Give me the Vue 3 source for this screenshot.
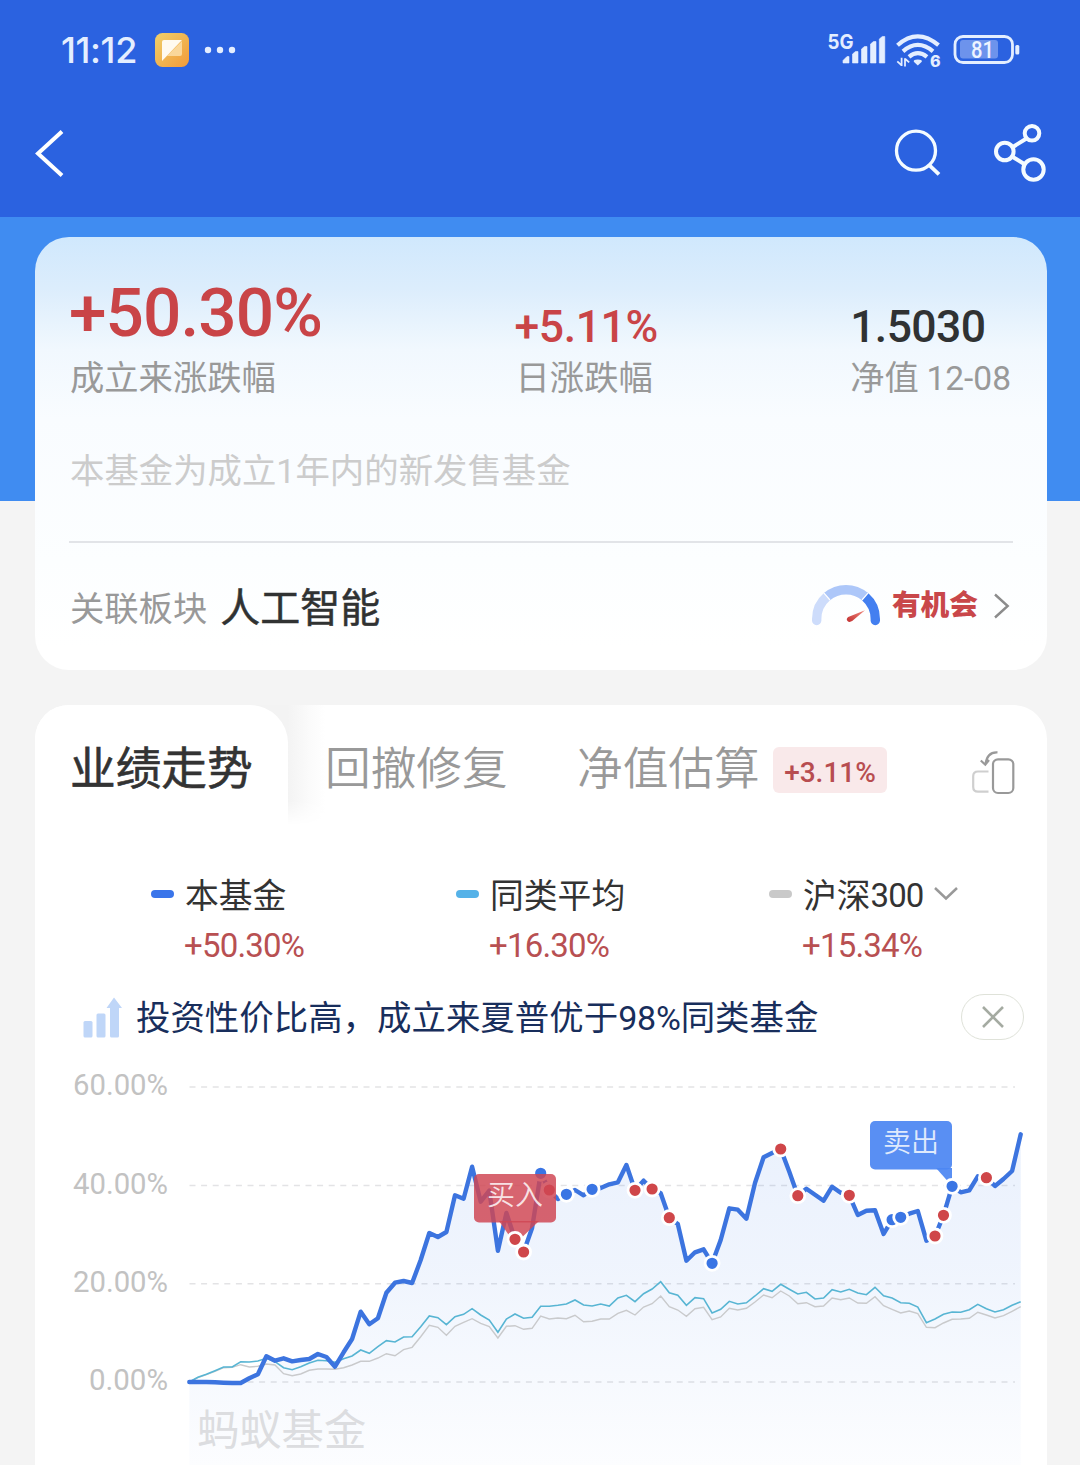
<script setup>
const STEP = 8.571
const X0 = 154.3
const TOP = 1054

const fund = [
  1382, 1382, 1382, 1382.3, 1382.7, 1383, 1383, 1378.3, 1374.3, 1356.3, 1360.7, 1358.3, 1361.3, 1360, 1359, 1354, 1357,
  1366.7, 1352.3, 1339, 1311.7, 1324.3, 1318.3, 1292.7, 1282.7, 1281, 1283, 1260, 1233, 1237, 1232, 1195.3, 1198.7,
  1166.7, 1201.7, 1190.7, 1250.7, 1213, 1239.3, 1252, 1228, 1173.3, 1190, 1199, 1194.3, 1190, 1195.3, 1189.3, 1188,
  1184.3, 1182.3, 1165, 1190.3, 1180.7, 1189, 1193.3, 1217.7, 1224, 1260.7, 1252.3, 1249.3, 1263.3, 1240, 1208.3,
  1209.7, 1218.7, 1183, 1157.3, 1153, 1149, 1171.7, 1195.7, 1188.7, 1194.7, 1200.7, 1186.7, 1192.7, 1195.3, 1215,
  1210.7, 1210.3, 1234, 1219.7, 1217.3, 1213.7, 1211, 1240.7, 1236, 1215.3, 1186.3, 1192.3, 1190.3, 1176.3, 1177.7,
  1186, 1179, 1171, 1134.3,
]
const peers = [
  1382, 1377.3, 1374.3, 1370.7, 1367, 1367, 1361.7, 1362, 1361, 1358.3, 1361.7, 1367.7, 1369.7, 1366.7, 1363, 1360.3,
  1360.7, 1362.3, 1358.7, 1356, 1350, 1353.3, 1346.7, 1340.7, 1342, 1337, 1336.7, 1326.7, 1316, 1317.7, 1324.7, 1316.7,
  1314.3, 1308.7, 1315, 1320, 1332.3, 1319, 1314, 1318.3, 1317.3, 1306.3, 1306.3, 1305.3, 1304, 1300, 1305, 1306, 1304,
  1306, 1298, 1295.3, 1301.7, 1293.7, 1289, 1281.7, 1292.7, 1295.3, 1305.3, 1297.7, 1298.7, 1313, 1309.3, 1301.3, 1304,
  1302.8, 1296, 1288.7, 1291.3, 1284.3, 1289.3, 1294, 1292.3, 1299, 1298, 1289.7, 1292, 1289.3, 1293, 1294.7, 1287.3,
  1295.7, 1298, 1302.7, 1303.3, 1307, 1322.7, 1319, 1314.3, 1312, 1312.3, 1309.7, 1304.3, 1308.7, 1312, 1309.7, 1305.3,
  1301.7,
]
const index300 = [
  1382, 1377.7, 1374.7, 1371.3, 1367.7, 1367.3, 1364.7, 1367, 1366.3, 1364, 1365, 1373.7, 1375.7, 1374, 1370.3, 1369,
  1369, 1369.3, 1367.7, 1365, 1361.3, 1361.3, 1358, 1353.7, 1355.7, 1349.7, 1347.3, 1336.7, 1325.3, 1327.3, 1335.3,
  1326.3, 1322.3, 1318.7, 1323.3, 1326.7, 1338, 1326.3, 1325.7, 1329.3, 1328.3, 1316, 1319, 1318, 1318.7, 1315.3,
  1321.7, 1321.3, 1319, 1319, 1313.3, 1310.3, 1315, 1307, 1303.7, 1296, 1306.7, 1310, 1316.3, 1308.7, 1307.3, 1319.7,
  1317, 1308.3, 1310, 1308.3, 1302, 1295, 1297.7, 1291, 1296, 1303.7, 1302.7, 1306.7, 1306, 1298, 1299.7, 1298, 1303,
  1303.3, 1296.7, 1305.7, 1309.3, 1313, 1311, 1313.7, 1327.3, 1327.7, 1323, 1319.3, 1319, 1318.3, 1312.3, 1315, 1318,
  1315.7, 1311.3, 1306.7,
]

const px = (i) => +(X0 + i * STEP).toFixed(1)
const py = (v) => +(v - TOP).toFixed(1)
const line = (values) => values.map((v, i) => `${px(i)},${py(v)}`).join(' ')
const area = `${px(0)},411 ${line(fund)} ${px(97)},411`

const buys = [38, 39, 42, 52, 54, 56, 69, 71, 77, 87, 88, 93]
const sells = [41, 44, 47, 61, 82, 83, 89]
const trades = [...buys.map((i) => [i, 'buy']), ...sells.map((i) => [i, 'sell'])]
  .sort((a, b) => a[0] - b[0])
  .map(([i, kind]) => ({ i, kind, x: px(i), y: py(fund[i]) }))
const under = trades.filter((t) => t.i === 41 || t.i === 42)
const over = trades.filter((t) => t.i !== 41 && t.i !== 42)

const axis = [
  { label: '60.00%', y: 33, x: 38, w: 95 },
  { label: '40.00%', y: 131.5, x: 38, w: 95 },
  { label: '20.00%', y: 229.7, x: 38, w: 95 },
  { label: '0.00%', y: 328, x: 54, w: 79 },
]
const legend = [
  { name: '本基金', value: '+50.30%', color: '#3a75ea' },
  { name: '同类平均', value: '+16.30%', color: '#55b2e8' },
  { name: '沪深', digits: '300', value: '+15.34%', color: '#c9c9c9', menu: true },
]
</script>

<template>
  <div class="page">
    <header class="top">
      <div class="status">
        <span class="clock">11:12</span>
        <svg class="app-icon" width="34" height="34" viewBox="0 0 34 34">
          <defs>
            <linearGradient id="gold" x1="0" y1="0" x2="1" y2="1">
              <stop offset="0" stop-color="#efd06c" />
              <stop offset="1" stop-color="#f29a38" />
            </linearGradient>
          </defs>
          <rect width="34" height="34" rx="7.5" fill="url(#gold)" />
          <path d="M27 8V21q0 2-2 2H12z" fill="#fad79a" />
          <path d="M7 9q0-2 2-2H27L7 28z" fill="#fffaf0" />
        </svg>
        <svg class="dots" width="32" height="8" viewBox="0 0 32 8" fill="#e4eeff">
          <circle cx="4" cy="4" r="3.200" /><circle cx="16" cy="4" r="3.200" /><circle cx="28" cy="4" r="3.200" />
        </svg>
        <svg class="signals" width="196" height="40" viewBox="826 30 196 40">
          <g fill="#e4eeff">
            <text x="827.500" y="48.500" class="g5" textLength="26" lengthAdjust="spacingAndGlyphs">5G</text>
            <path d="M843 63v-2.500l4-4h2v6.500zM852.500 63v-9l3-2.500h2.500V63zM861.500 63V49l3-2.500h2.500V63zM870.500 63V44l3-2.500h2.500V63zM879.300 63V39l3-2.500h2.500V63z" stroke="#e4eeff" stroke-width=".6" stroke-linejoin="round" />
            <path d="M917.800 65.500l-4-3.700q-.600-2.300 4-2.300t4 2.300z" />
            <path d="M901.600 57.800v8.200M897.300 61.300l4.300 4M905 66.500v-8.200M905 58.800l4.200 3.600" fill="none" stroke="#e4eeff" stroke-width="1.800" />
            <text x="930" y="66.500" class="g6">6</text>
            <rect x="1015.300" y="45" width="4" height="9.500" rx="1.500" />
          </g>
          <g fill="none" stroke="#e4eeff" stroke-width="4.200">
            <path d="M897.500 45.200Q917.500 27.500 938.500 45.200" />
            <path d="M903 51.300Q917.700 38.500 933 51.300" />
            <path d="M909 56.800Q917.800 49.500 927 56.800" />
          </g>
          <rect x="955" y="36.500" width="57.500" height="26" rx="8" fill="none" stroke="#e4eeff" stroke-width="2.800" />
          <rect x="960" y="40" width="38" height="18.500" rx="3" fill="#6d93ec" />
          <text x="971" y="58" class="batt" textLength="23" lengthAdjust="spacingAndGlyphs">81</text>
        </svg>
      </div>
      <nav class="nav">
        <svg width="32" height="52" viewBox="34 127 32 52" fill="none" stroke="#fff" stroke-width="4">
          <path d="M62 131.500L38 153.500l24 22" />
        </svg>
        <svg width="156" height="64" viewBox="892 121 156 64" fill="none" stroke="#f4fbff">
          <circle cx="916" cy="150.700" r="19.500" stroke-width="3.300" />
          <path d="M929.500 165.300l9.500 9" stroke-width="3.800" />
          <g stroke-width="4">
            <circle cx="1032" cy="133.300" r="7.300" />
            <circle cx="1004.800" cy="151.500" r="8.800" />
            <circle cx="1033.500" cy="169.500" r="10.200" />
            <path d="M1026.500 138.500l-14.500 9M1012 156.500l13 8" />
          </g>
        </svg>
      </nav>
    </header>

    <main class="body">
      <section class="card summary">
        <div class="stats">
          <div class="stat">
            <div class="num big">+50.30%</div>
            <div class="label">成立来涨跌幅</div>
          </div>
          <div class="stat mid">
            <div class="num">+5.11%</div>
            <div class="label">日涨跌幅</div>
          </div>
          <div class="stat last">
            <div class="num dark">1.5030</div>
            <div class="label">净值 <span class="date">12-08</span></div>
          </div>
        </div>
        <p class="note">本基金为成立<span class="one">1</span>年内的新发售基金</p>
        <div class="sector">
          <span class="label">关联板块</span>
          <span class="sector-name">人工智能</span>
          <svg class="gauge" width="72" height="46" viewBox="810 584 72 46">
            <defs>
              <linearGradient id="needle" x1="0" y1="1" x2="1" y2="0">
                <stop offset="0" stop-color="#c22f2f" /><stop offset="1" stop-color="#f08a80" />
              </linearGradient>
            </defs>
            <g fill="none" stroke-width="9.400">
              <path d="M816.700 621.500v-1.500A29.300 29.300 0 0 1 827 597.700" stroke="#cddcfb" stroke-linecap="round" />
              <path d="M865.300 597.900A29.300 29.300 0 0 1 875.300 620v1.500" stroke="#437ff0" stroke-linecap="round" />
              <path d="M827 597.700A29.300 29.300 0 0 1 865 597.700" stroke="#adc7f9" />
            </g>
            <path d="M823.800 593.800l6.200 7.200M868.200 593.800l-6.200 7.200" stroke="#fff" stroke-width="1.200" />
            <path d="M865 611.300l-12.800 10.800q-3 1.700-4.700-.200t.700-4z" fill="url(#needle)" />
          </svg>
          <span class="chance">有机会</span>
          <svg class="more" width="18" height="26" viewBox="0 0 18 26" fill="none" stroke="#8c8c8c" stroke-width="2.400">
            <path d="M2 1.500l12.700 11.500L2 24.500" />
          </svg>
        </div>
      </section>

      <section class="card trend">
        <div class="tabs">
          <div class="tab active"><span>业绩走势</span></div>
          <div class="tab second">回撤修复</div>
          <div class="tab third">净值估算</div>
          <span class="badge">+3.11%</span>
          <svg class="rotate" width="46" height="48" viewBox="970 748 46 48" fill="none" stroke-width="2.200">
            <path d="M988.500 771.500H978q-4.800 0-4.800 4.800V787q0 4.700 4.800 4.700h10.500" stroke="#cfcfcf" />
            <rect x="993" y="759.300" width="20.300" height="33.700" rx="5" stroke="#999" />
            <path d="M997.500 752.400q-10.500-.700-12 12M980.800 760.500l4.500 4.200 3.700-4.700" stroke="#999" />
          </svg>
        </div>

        <div class="legend">
          <div v-for="item in legend" :key="item.name" class="legend-item">
            <i class="dash" :style="{ background: item.color }"></i>
            <div>
              <div class="legend-name">
                {{ item.name }}<span v-if="item.digits" class="digits">{{ item.digits }}</span>
                <svg v-if="item.menu" width="26" height="18" viewBox="0 0 26 18" fill="none" stroke="#999" stroke-width="2.500">
                  <path d="M2 3l11 10.500L24 3" />
                </svg>
              </div>
              <div class="legend-value">{{ item.value }}</div>
            </div>
          </div>
        </div>

        <div class="tip">
          <svg width="42" height="44" viewBox="82 995 42 44" fill="#bfd6f8">
            <rect x="83.500" y="1021" width="9" height="16.500" rx="1.500" />
            <rect x="96.500" y="1013.500" width="9" height="24" rx="1.500" />
            <path d="M110 1036V1008h-3.500l7.500-10.500 8 10.500H119v28q0 1.500-1.500 1.500h-6q-1.500 0-1.500-1.500z" />
          </svg>
          <span class="tip-text">投资性价比高，成立来夏普优于<span class="pct">98%</span>同类基金</span>
          <button class="close" aria-label="close">
            <svg width="24" height="22" viewBox="0 0 24 22" fill="none" stroke="#a5aba2" stroke-width="2.600">
              <path d="M2 1l20 20M22 1L2 21" />
            </svg>
          </button>
        </div>

        <svg class="chart" width="1012" height="411" viewBox="0 0 1012 411">
          <defs>
            <linearGradient id="fill" x1="0" y1="80" x2="0" y2="411" gradientUnits="userSpaceOnUse">
              <stop offset="0" stop-color="#3a7aea" stop-opacity=".105" />
              <stop offset=".4" stop-color="#3a7aea" stop-opacity=".08" />
              <stop offset="1" stop-color="#3a7aea" stop-opacity=".015" />
            </linearGradient>
          </defs>
          <g v-for="row in axis" :key="row.label">
            <text class="tick" :x="row.x" :y="row.y + 8" :textLength="row.w" lengthAdjust="spacingAndGlyphs">{{ row.label }}</text>
            <line x1="154.500" x2="980" :y1="row.y" :y2="row.y" class="grid" />
          </g>
          <polygon :points="area" fill="url(#fill)" />
          <text class="watermark" x="162" y="391">蚂蚁基金</text>
          <polyline :points="line(index300)" fill="none" stroke="#c9cacc" stroke-width="1.400" />
          <polyline :points="line(peers)" fill="none" stroke="#58b5d3" stroke-width="1.600" />
          <polyline :points="line(fund)" fill="none" stroke="#3c74df" stroke-width="4.400" stroke-linejoin="round" stroke-linecap="round" />
          <circle v-for="t in under" :key="t.i" :cx="t.x" :cy="t.y" r="7" :class="['dot', t.kind]" />
          <rect x="439" y="120" width="82" height="48.500" rx="5" class="flag-buy" />
          <path d="M464 167h40l-24 23z" class="flag-buy" />
          <rect x="835" y="67" width="82" height="48.500" rx="5" class="flag-sell" />
          <path d="M901 114h16v18z" class="flag-sell" />
          <circle v-for="t in over" :key="t.i" :cx="t.x" :cy="t.y" r="7" :class="['dot', t.kind]" />
          <text x="452" y="151" class="flag-text">买入</text>
          <text x="848" y="98" class="flag-text">卖出</text>
        </svg>
      </section>
    </main>
  </div>
</template>

<style>
body {
  background: #f4f4f4;
}
</style>

<style scoped>
.page {
  width: 1080px;
  height: 1465px;
  overflow: hidden;
  background: #f4f4f4;
  font-family: "Noto Sans CJK SC", sans-serif;
  color: #333;
}
.page svg {
  display: block;
  flex: none;
}
.top {
  height: 217px;
  background: #2b62e0;
}
.status {
  display: flex;
  align-items: center;
  height: 100px;
  padding: 0 58px 0 61px;
}
.clock {
  width: 94px;
  font: 500 36px/40px Inter, sans-serif;
  letter-spacing: -0.4px;
  color: #e4eeff;
  white-space: nowrap;
}
.dots {
  margin-left: 15px;
}
.signals {
  margin-left: auto;
}
.g5 {
  font: 700 20.500px Inter, sans-serif;
}
.g6 {
  font: 800 16px Inter, sans-serif;
}
.batt {
  font: 500 23.500px Roboto, sans-serif;
  fill: #eef4ff;
}
.nav {
  display: flex;
  align-items: center;
  justify-content: space-between;
  height: 106px;
  padding: 0 32px 0 34px;
}
.body {
  display: flex;
  flex-direction: column;
  gap: 35px;
  padding: 20px 33px 0 35px;
  background: linear-gradient(#408cf1, #408cf1) no-repeat 0 0 / 100% 284px;
}
.card {
  border-radius: 34px;
  background: #fff;
  overflow: hidden;
}
.summary {
  box-sizing: border-box;
  height: 433px;
  padding: 34px 34px 0 34px;
  background: linear-gradient(#d0e8fd 0, #dcedfc 12%, #f1f8fe 26%, #f9fcff 42%, #fcfeff 75%, #fff 95%);
}
.stats {
  display: flex;
  align-items: flex-end;
  padding-left: 1px;
}
.stat {
  width: 446px;
}
.stat.mid {
  width: 335px;
}
.stat.last {
  width: 163px;
  white-space: nowrap;
}
.num {
  font: 500 44.5px/55px Roboto, sans-serif;
  color: #c94447;
  white-space: nowrap;
  letter-spacing: -0.4px;
  margin-left: -1px;
}
.num.big {
  font-size: 67.500px;
  line-height: 84px;
  letter-spacing: -0.9px;
}
.num.dark {
  color: #303233;
  letter-spacing: -0.6px;
  margin-left: 0;
}
.label {
  font-size: 34.300px;
  line-height: 40px;
  height: 40px;
  font-weight: 400;
  color: #999;
  white-space: nowrap;
}
.date {
  font: 400 33.500px/0 Roboto, sans-serif;
}
.note {
  margin: 53px 0 53px 1px;
  height: 40px;
  font-size: 34.400px;
  line-height: 40px;
  font-weight: 400;
  color: #ccc;
}
.one {
  font: 400 34px/0 Roboto, sans-serif;
}
.sector {
  display: flex;
  align-items: center;
  height: 126px;
  padding-left: 1px;
  border-top: 2px solid #e2e4e8;
}
.sector-name {
  position: relative;
  top: -1px;
  margin-left: 13px;
  font-size: 40px;
  line-height: 50px;
  font-weight: 400;
  -webkit-text-stroke: 0.5px #303232;
  color: #303232;
}
.gauge {
  margin: 0 10px 0 auto;
}
.chance {
  position: relative;
  top: -3px;
  font-size: 28.700px;
  line-height: 40px;
  font-weight: 900;
  color: #c9474a;
}
.more {
  margin: 0 2px 0 15px;
}
.trend {
  height: 800px;
  border-radius: 34px 34px 0 0;
}
.tabs {
  position: relative;
  display: flex;
  align-items: center;
  height: 130px;
  font-size: 45.700px;
  line-height: 60px;
  color: #999;
}
.tabs::before {
  content: "";
  position: absolute;
  left: 215px;
  top: 0;
  width: 75px;
  height: 120px;
  background: linear-gradient(90deg, #f3f3f3 0 50%, #fbfbfb 80%, #fff 100%);
  -webkit-mask: linear-gradient(#000 80%, transparent);
  mask: linear-gradient(#000 80%, transparent);
}
.tab {
  position: relative;
  font-weight: 350;
  white-space: nowrap;
}
.tab.active {
  box-sizing: border-box;
  width: 253px;
  height: 130px;
  padding: 30px 0 0 35px;
  border-radius: 0 38px 0 0;
  background: #fff;
  font-weight: 400;
  -webkit-text-stroke: 0.6px #333;
  color: #333;
}
.tab.second {
  margin-left: 37px;
  width: 252px;
  top: -5px;
}
.tab.third {
  width: 184px;
  top: -5px;
}
.badge {
  margin-left: 12px;
  width: 114px;
  height: 46px;
  border-radius: 6px;
  background: #f9e9ea;
  color: #b84d50;
  font: 500 28px/51px Roboto, sans-serif;
  text-align: center;
}
.rotate {
  margin: 4px 0 0 83px;
}
.legend {
  display: flex;
  padding: 38px 0 0 116px;
}
.legend-item {
  display: flex;
  flex: none;
  width: 305px;
}
.legend-item:nth-child(2) {
  width: 313px;
}
.legend-item:nth-child(3) {
  width: 200px;
}
.dash {
  width: 23px;
  height: 8px;
  margin: 17px 11px 0 0;
  border-radius: 4px;
}
.legend-name {
  display: flex;
  align-items: center;
  font-size: 33.800px;
  line-height: 42px;
  height: 42px;
  font-weight: 400;
  color: #333;
  white-space: nowrap;
}
.digits {
  font: 400 33px/46px Roboto, sans-serif;
  letter-spacing: -1px;
  padding-top: 3px;
}
.legend-name svg {
  margin-left: 10px;
}
.legend-value {
  margin-top: 10px;
  font: 400 33px/42px Roboto, sans-serif;
  letter-spacing: -0.800px;
  margin-left: -1px;
  color: #b85052;
}
.tip {
  display: flex;
  align-items: center;
  height: 46px;
  margin: 27px 23px 0 47px;
}
.tip-text {
  margin-left: 12px;
  font-size: 34.450px;
  line-height: 42px;
  font-weight: 400;
  color: #182e5c;
  white-space: nowrap;
  position: relative;
  top: -2px;
}
.pct {
  font: 400 34px/0 Roboto, sans-serif;
  letter-spacing: -0.200px;
}
.close {
  display: flex;
  align-items: center;
  justify-content: center;
  box-sizing: border-box;
  width: 63px;
  height: 46px;
  margin-left: auto;
  padding: 0;
  border: 1.500px solid #dfe2d9;
  border-radius: 23px;
  background: #fff;
}
.chart {
  margin-top: 14px;
}
.tick {
  font: 400 29px Roboto, sans-serif;
  fill: #c2c2c2;
}
.grid {
  stroke: #e3e3e5;
  stroke-width: 1.500;
  stroke-dasharray: 6 5.600;
}
.watermark {
  font-size: 42.300px;
  font-weight: 400;
  fill: #dcdde0;
}
.dot {
  stroke: #fff;
  stroke-width: 2.800;
}
.dot.buy {
  fill: #cf4649;
}
.dot.sell {
  fill: #3a75e4;
}
.flag-buy {
  fill: #cf4653;
  fill-opacity: 0.840;
}
.flag-sell {
  fill: #4c87f2;
  fill-opacity: 0.930;
}
.flag-text {
  font-size: 28px;
  font-weight: 350;
  fill: #fff;
  fill-opacity: 0.820;
}
</style>
